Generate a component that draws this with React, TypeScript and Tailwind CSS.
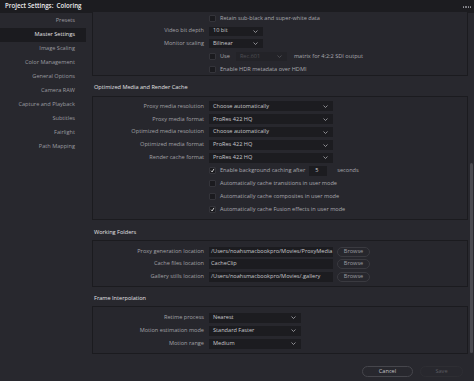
import React from "react";

const Chevron = ({ dim = false }: { dim?: boolean }) => (
  <svg width="5" height="3" viewBox="0 0 5 3" className="shrink-0">
    <polyline points="0.5,0.5 2.5,2.5 4.5,0.5" fill="none" stroke={dim ? "#55555a" : "#a8a8ad"} strokeWidth="0.8" />
  </svg>
);

const Check = () => (
  <svg width="7" height="7" viewBox="0 0 7 7">
    <polyline points="1.5,3.8 3,5.5 5.6,1.2" fill="none" stroke="#f2f2f2" strokeWidth="1.1" />
  </svg>
);

const Box = ({ checked = false }: { checked?: boolean }) => (
  <div className="w-[7px] h-[7px] bg-[#1b1b1f] border border-[#34343a] shrink-0 flex items-center justify-center rounded-[1px]">
    {checked ? <Check /> : null}
  </div>
);

const Label = ({ children }: { children: React.ReactNode }) => (
  <div className="w-[111px] shrink-0 text-right text-[#a1a1a6] whitespace-nowrap">{children}</div>
);

const Select = ({ value, w, h = "h-[10px]" }: { value: string; w: string; h?: string }) => (
  <div className={`ml-[5px] ${w} ${h} bg-[#1c1c20] flex items-center justify-between pl-[4px] pr-[5px] text-[#c8c8cc] whitespace-nowrap`}>
    <span>{value}</span>
    <Chevron />
  </div>
);

const SideItem = ({ label, active = false }: { label: string; active?: boolean }) => (
  <div
    className={`h-[14px] flex items-center justify-end pr-[11px] whitespace-nowrap mr-[6px] ${
      active ? "bg-[#1b1b1f] text-[#e4e4e6]" : "text-[#9b9ba0]"
    }`}
  >
    {label}
  </div>
);

const CheckRow = ({ label, checked = false, h }: { label: React.ReactNode; checked?: boolean; h: string }) => (
  <div className={`flex items-center ${h}`}>
    <div className="w-[116px] shrink-0" />
    <Box checked={checked} />
    <div className="ml-[4px] text-[#a8a8ad] whitespace-nowrap flex items-center">{label}</div>
  </div>
);

export default function App() {
  const r2 = "h-[12.875px]";
  return (
    <div
      className="w-[474px] h-[381px] bg-[#28282e] overflow-hidden flex flex-col text-[5.6px] leading-none"
      style={{ fontFamily: '"Open Sans", "Noto Sans", sans-serif' }}
    >
      {/* Title bar */}
      <div className="h-[13px] shrink-0 bg-[#1c1c20] flex items-center justify-between pl-[5px] pr-[3px]">
        <div className="text-[#ececee] font-semibold text-[6.2px]">Project Settings:&nbsp; Coloring</div>
        <div className="flex gap-[1px] mt-[1px]">
          <div className="w-[1.2px] h-[1.2px] bg-[#9a9aa0] rounded-full" />
          <div className="w-[1.2px] h-[1.2px] bg-[#9a9aa0] rounded-full" />
          <div className="w-[1.2px] h-[1.2px] bg-[#9a9aa0] rounded-full" />
          <div className="w-[1.2px] h-[1.2px] bg-[#9a9aa0] rounded-full" />
        </div>
      </div>

      <div className="flex flex-1 min-h-0">
        {/* Sidebar */}
        <div className="w-[92px] shrink-0 pt-[1px]">
          <SideItem label="Presets" />
          <SideItem label="Master Settings" active />
          <SideItem label="Image Scaling" />
          <SideItem label="Color Management" />
          <SideItem label="General Options" />
          <SideItem label="Camera RAW" />
          <SideItem label="Capture and Playback" />
          <SideItem label="Subtitles" />
          <SideItem label="Fairlight" />
          <SideItem label="Path Mapping" />
        </div>

        {/* Main */}
        <div className="flex-1 flex min-w-0">
          <div className="w-[376px] shrink-0 flex flex-col">
            {/* Box 1 */}
            <div className="h-[64px] border border-t-0 border-[#1b1b1f] bg-[#27272d] -mt-[1px]">
              <CheckRow h="h-[12.75px]" label="Retain sub-black and super-white data" />
              <div className="flex items-center h-[12.75px]">
                <Label>Video bit depth</Label>
                <Select value="10 bit" w="w-[54px]" h="h-[9px]" />
              </div>
              <div className="flex items-center h-[12.75px]">
                <Label>Monitor scaling</Label>
                <Select value="Bilinear" w="w-[54px]" h="h-[9px]" />
              </div>
              <CheckRow
                h="h-[12.75px]"
                label={
                  <>
                    <span>Use</span>
                    <div className="ml-[6px] w-[51px] h-[9px] bg-[#232328] flex items-center justify-between pl-[4px] pr-[5px] text-[#4e4e53]">
                      <span>Rec.601</span>
                      <Chevron dim />
                    </div>
                    <span className="ml-[7px]">matrix for 4:2:2 SDI output</span>
                  </>
                }
              />
              <CheckRow h="h-[12.75px]" label="Enable HDR metadata over HDMI" />
            </div>

            {/* Header 2 */}
            <div className="h-[20px] shrink-0 pl-[2px] pt-[9px] text-[#e2e2e4]">Optimized Media and Render Cache</div>
            <div className="border border-[#1b1b1f] bg-[#27272d] pt-[3px] pb-[3px]">
              <div className={`flex items-center ${r2}`}>
                <Label>Proxy media resolution</Label>
                <Select value="Choose automatically" w="w-[124px]" />
              </div>
              <div className={`flex items-center ${r2}`}>
                <Label>Proxy media format</Label>
                <Select value="ProRes 422 HQ" w="w-[124px]" />
              </div>
              <div className={`flex items-center ${r2}`}>
                <Label>Optimized media resolution</Label>
                <Select value="Choose automatically" w="w-[124px]" />
              </div>
              <div className={`flex items-center ${r2}`}>
                <Label>Optimized media format</Label>
                <Select value="ProRes 422 HQ" w="w-[124px]" />
              </div>
              <div className={`flex items-center ${r2}`}>
                <Label>Render cache format</Label>
                <Select value="ProRes 422 HQ" w="w-[124px]" />
              </div>
              <CheckRow
                h={r2}
                checked
                label={
                  <>
                    <span>Enable background caching after</span>
                    <div className="ml-[4px] w-[18px] h-[10px] bg-[#1c1c20] flex items-center pl-[6px] text-[#d0d0d4]">5</div>
                    <span className="ml-[10px]">seconds</span>
                  </>
                }
              />
              <CheckRow h={r2} label="Automatically cache transitions in user mode" />
              <CheckRow h={r2} label="Automatically cache composites in user mode" />
              <CheckRow h={r2} checked label="Automatically cache Fusion effects in user mode" />
            </div>

            {/* Header 3 */}
            <div className="h-[20px] shrink-0 pl-[2px] pt-[10px] text-[#e2e2e4]">Working Folders</div>
            <div className="border border-[#1b1b1f] bg-[#27272d] pt-[4.5px] pb-[3.5px]">
              {[
                ["Proxy generation location", "/Users/noahsmacbookpro/Movies/ProxyMedia"],
                ["Cache files location", "CacheClip"],
                ["Gallery stills location", "/Users/noahsmacbookpro/Movies/.gallery"],
              ].map(([l, v]) => (
                <div key={l} className="flex items-center h-[12.5px]">
                  <Label>{l}</Label>
                  <div className="ml-[5px] w-[124px] h-[10px] bg-[#1c1c20] flex items-center pl-[2px] text-[#c8c8cc] whitespace-nowrap overflow-hidden">
                    {v}
                  </div>
                  <div className="ml-[4px] w-[33px] h-[10px] rounded-full border border-[#3a3a40] flex items-center justify-center text-[#9d9da2]">
                    Browse
                  </div>
                </div>
              ))}
            </div>

            {/* Header 4 */}
            <div className="h-[19px] shrink-0 pl-[2px] pt-[9px] text-[#e2e2e4]">Frame Interpolation</div>
            <div className="border border-[#1b1b1f] bg-[#27272d] pt-[4px] pb-[3px]">
              <div className="flex items-center h-[13px]">
                <Label>Retime process</Label>
                <Select value="Nearest" w="w-[92px]" />
              </div>
              <div className="flex items-center h-[13px]">
                <Label>Motion estimation mode</Label>
                <Select value="Standard Faster" w="w-[92px]" />
              </div>
              <div className="flex items-center h-[13px]">
                <Label>Motion range</Label>
                <Select value="Medium" w="w-[92px]" />
              </div>
            </div>

            {/* Footer buttons */}
            <div className="flex justify-end items-start pt-[12px] pr-[5px] gap-[7px]">
              <div className="w-[51px] h-[11px] rounded-full border border-[#46464c] flex items-center justify-center text-[#c4c4c8]">
                Cancel
              </div>
              <div className="w-[43px] h-[11px] rounded-full border border-[#2e2e33] flex items-center justify-center text-[#5c5c61]">
                Save
              </div>
            </div>
          </div>

          {/* Scrollbar */}
          <div className="flex-1 flex justify-center">
            <div className="w-[3px] h-[190px] mt-[150px] bg-[#4a4a50] rounded-full" />
          </div>
        </div>
      </div>
    </div>
  );
}
